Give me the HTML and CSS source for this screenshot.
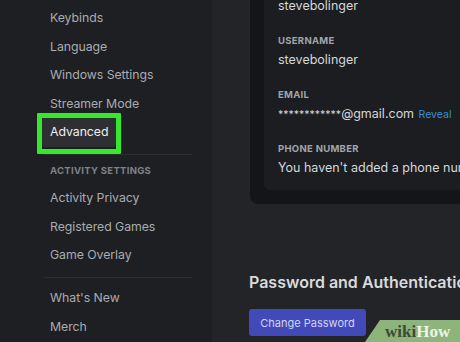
FILE: index.html
```html
<!DOCTYPE html>
<html>
<head>
<meta charset="utf-8">
<link rel="stylesheet" href="styles.css">
</head>
<body>
<div class="app">
  <nav class="sidebar">
    <div class="item">Keybinds</div>
    <div class="item">Language</div>
    <div class="item">Windows Settings</div>
    <div class="item">Streamer Mode</div>
    <div class="item selected"><span class="sel-bg">Advanced</span><span class="highlight"></span></div>
    <div class="sep sep-a"></div>
    <div class="header">Activity Settings</div>
    <div class="item">Activity Privacy</div>
    <div class="item">Registered Games</div>
    <div class="item">Game Overlay</div>
    <div class="sep sep-b"></div>
    <div class="item">What's New</div>
    <div class="item">Merch</div>
  </nav>
  <main class="main">
    <section class="card">
      <div class="card-inner">
        <div class="field">
          <div class="value">stevebolinger</div>
        </div>
        <div class="field">
          <div class="label">Username</div>
          <div class="value">stevebolinger</div>
        </div>
        <div class="field">
          <div class="label">Email</div>
          <div class="value"><span class="stars">************</span>@gmail.com <span class="reveal">Reveal</span></div>
        </div>
        <div class="field last">
          <div class="label">Phone Number</div>
          <div class="value">You haven't added a phone number yet.</div>
        </div>
      </div>
    </section>
    <h2 class="heading">Password and Authentication</h2>
    <button class="btn">Change Password</button>
  </main>
</div>
<div class="wikihow"><span class="wiki">wiki</span><span class="how">How</span></div>
</body>
</html>
```
FILE: styles.css
```css
html, body {
  margin: 0;
  padding: 0;
  width: 460px;
  height: 342px;
  overflow: hidden;
  background: #232428;
  font-family: Inter, "Noto Sans", sans-serif;
}
.app {
  display: flex;
  height: 342px;
}
.sidebar {
  width: 212px;
  flex: none;
  display: flex;
  flex-direction: column;
  background: #1e1f22;
  padding-top: 6px;
  box-sizing: border-box;
}
.item {
  position: relative;
  flex: none;
  height: 24px;
  line-height: 24px;
  margin-bottom: 4.5px;
  padding-left: 50px;
  font-size: 12.3px;
  letter-spacing: -0.05px;
  color: #a9acb1;
  white-space: nowrap;
}
.item.selected {
  padding-left: 42px;
}
.sel-bg {
  display: inline-block;
  height: 30px;
  line-height: 30px;
  margin-top: -3px;
  padding: 0 8px;
  width: 74px;
  box-sizing: border-box;
  background: #2d2f33;
  border-radius: 3px;
  color: #f0f1f3;
  vertical-align: top;
}
.highlight {
  position: absolute;
  left: 37px;
  top: -7px;
  width: 84px;
  height: 41px;
  box-sizing: border-box;
  border: 5px solid #36e82b;
  border-radius: 1px;
}
.sep {
  flex: none;
  height: 1px;
  background: #2b2c30;
  margin-left: 44px;
  width: 148px;
}
.sep-a {
  margin-top: 5.5px;
  margin-bottom: 10px;
}
.sep-b {
  margin-top: 5.5px;
  margin-bottom: 8px;
}
.header {
  flex: none;
  height: 12px;
  line-height: 12px;
  padding-left: 50px;
  margin-bottom: 9px;
  font-size: 9.5px;
  font-weight: 700;
  letter-spacing: 0.3px;
  text-transform: uppercase;
  color: #7f8288;
}
.main {
  flex: 1;
  min-width: 0;
  overflow: hidden;
  padding-left: 38px;
  background: #232428;
}
.card {
  width: 320px;
  margin-top: -33px;
  padding: 14px;
  background: #141518;
  border-radius: 8px;
}
.card-inner {
  background: #1c1d20;
  border-radius: 6px;
  padding: 16px 12px 13px 14px;
}
.field {
  margin-bottom: 19px;
}
.field.last {
  margin-bottom: 0;
}
.label {
  height: 14px;
  line-height: 14px;
  margin-bottom: 3px;
  font-size: 9.5px;
  font-weight: 700;
  letter-spacing: 0.3px;
  text-transform: uppercase;
  color: #a2a5ab;
}
.value {
  height: 18px;
  line-height: 18px;
  font-size: 12.5px;
  color: #d5d7db;
  white-space: nowrap;
}
.stars {
  font-size: 10.5px;
  letter-spacing: 0;
}
.reveal {
  font-size: 10.5px;
  color: #3a8fd6;
  margin-left: 1px;
}
.heading {
  margin: 68px 0 0 -1px;
  height: 20px;
  line-height: 20px;
  font-size: 16px;
  font-weight: 600;
  color: #d9dadd;
  white-space: nowrap;
}
.btn {
  display: block;
  margin: 17px 0 0 -1px;
  width: 117px;
  height: 27px;
  padding: 0;
  border: none;
  border-radius: 3px;
  background: #4249b9;
  color: #d2d5f3;
  font-family: Inter, "Noto Sans", sans-serif;
  font-size: 11px;
}
.wikihow {
  position: absolute;
  right: 0;
  bottom: 0;
  width: 95px;
  height: 22px;
  background: #8db47b;
  clip-path: polygon(15px 0, 100% 0, 100% 100%, 0 100%);
  box-sizing: border-box;
  padding-left: 20px;
  line-height: 23px;
  font-family: "Liberation Serif", serif;
  font-weight: 700;
  font-size: 17px;
}
.wiki {
  color: #3d4b36;
}
.how {
  color: #eef3e8;
}
```
